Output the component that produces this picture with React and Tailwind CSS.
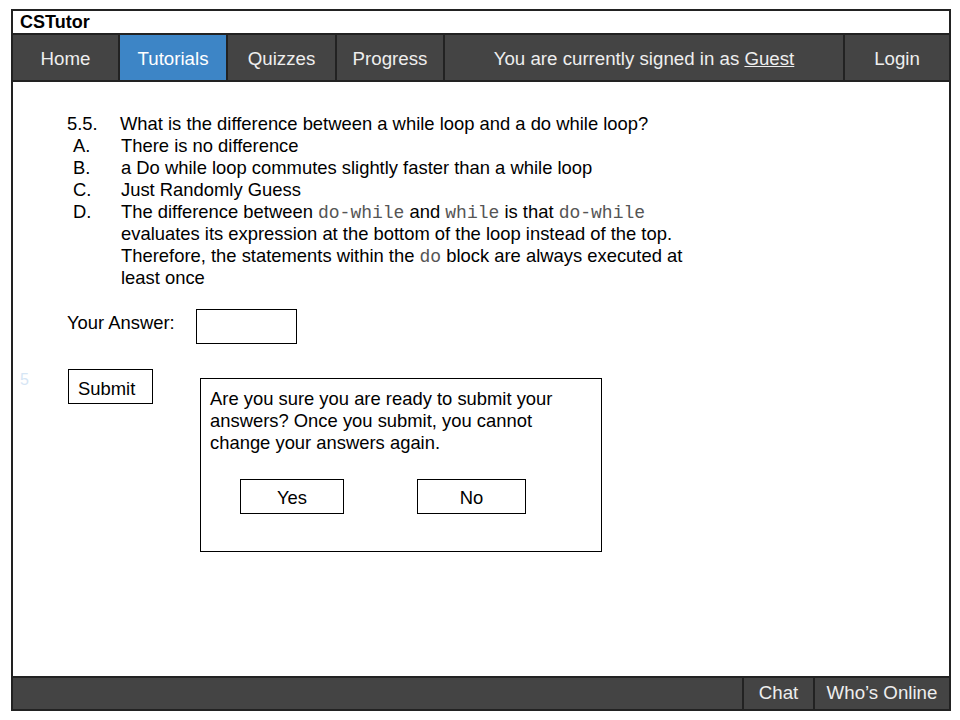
import React from 'react';

const navItems = [
  { label: 'Home', w: 'w-[107px]' },
  { label: 'Tutorials', w: 'w-[108px]', active: true },
  { label: 'Quizzes', w: 'w-[109px]' },
  { label: 'Progress', w: 'w-[108px]' },
];

function Code({ children }) {
  return <span className="font-['Liberation_Mono',monospace] text-[18px] leading-[0] text-[#555]">{children}</span>;
}

function Option({ label, children }) {
  return (
    <div className="flex">
      <div className="w-[48px] shrink-0">{label}</div>
      <div className="w-[620px]">{children}</div>
    </div>
  );
}

export default function App() {
  return (
    <div className="w-[960px] h-[720px] bg-white pt-[9px] pl-[11px] font-['Liberation_Sans',Arial,sans-serif] text-black">
      <div className="w-[940px] h-[702px] border-2 border-[#222] flex flex-col">
        <div className="h-[22px] pl-[7px] text-[18px] font-bold leading-[23px]">CSTutor</div>

        <nav className="h-[49px] border-y-2 border-[#222] bg-[#444] flex text-[18.7px] text-[#eee]">
          {navItems.map((item) => (
            <div
              key={item.label}
              className={`${item.w} border-r-2 border-[#222] flex items-center justify-center pt-[3px] ${item.active ? 'bg-[#3d85c6] text-white' : ''}`}
            >
              {item.label}
            </div>
          ))}
          <div className="w-[400px] border-r-2 border-[#222] flex items-center justify-center pt-[3px]">
            <span>
              You are currently signed in as <span className="underline">Guest</span>
            </span>
          </div>
          <div className="flex-1 flex items-center justify-center pt-[3px]">Login</div>
        </nav>

        <main className="flex-1 pt-[31px] text-[18.4px] leading-[22px]">
          <div className="pl-[54px]">
            <div className="flex">
              <div className="w-[53px] shrink-0">5.5.</div>
              <div>What is the difference between a while loop and a do while loop?</div>
            </div>
            <div className="pl-[6px]">
              <Option label="A.">There is no difference</Option>
              <Option label="B.">a Do while loop commutes slightly faster than a while loop</Option>
              <Option label="C.">Just Randomly Guess</Option>
              <Option label="D.">
                The difference between <Code>do-while</Code> and <Code>while</Code> is that <Code>do-while</Code>
                <br />
                evaluates its expression at the bottom of the loop instead of the top.
                <br />
                Therefore, the statements within the <Code>do</Code> block are always executed at
                <br />
                least once
              </Option>
            </div>

            <div className="flex items-start mt-[20px]">
              <span className="w-[129px] pt-[3px]">Your Answer:</span>
              <div className="w-[101px] h-[35px] border border-black" />
            </div>
          </div>

          <div className="flex items-start mt-[25px] pl-[7px]">
            <span className="w-[48px] text-[16px] text-[#d6e6f5]">5</span>
            <button className="w-[85px] h-[35px] border border-black text-left pl-[9px] pt-[4px]">Submit</button>
            <div className="ml-[47px] mt-[9px] w-[402px] h-[174px] border border-black pl-[9px] pt-[9px]">
              <p>
                Are you sure you are ready to submit your
                <br />
                answers? Once you submit, you cannot
                <br />
                change your answers again.
              </p>
              <div className="flex mt-[25px] pl-[30px]">
                <button className="w-[104px] h-[35px] border border-black pt-[3px]">Yes</button>
                <button className="ml-[73px] w-[109px] h-[35px] border border-black pt-[3px]">No</button>
              </div>
            </div>
          </div>
        </main>

        <footer className="h-[33px] border-t-2 border-[#222] bg-[#444] flex text-[18.7px] text-[#eee]">
          <div className="flex-1 border-r-2 border-[#222]" />
          <div className="w-[71px] border-r-2 border-[#222] flex items-center justify-center">Chat</div>
          <div className="w-[134px] flex items-center justify-center">Who’s Online</div>
        </footer>
      </div>
    </div>
  );
}
